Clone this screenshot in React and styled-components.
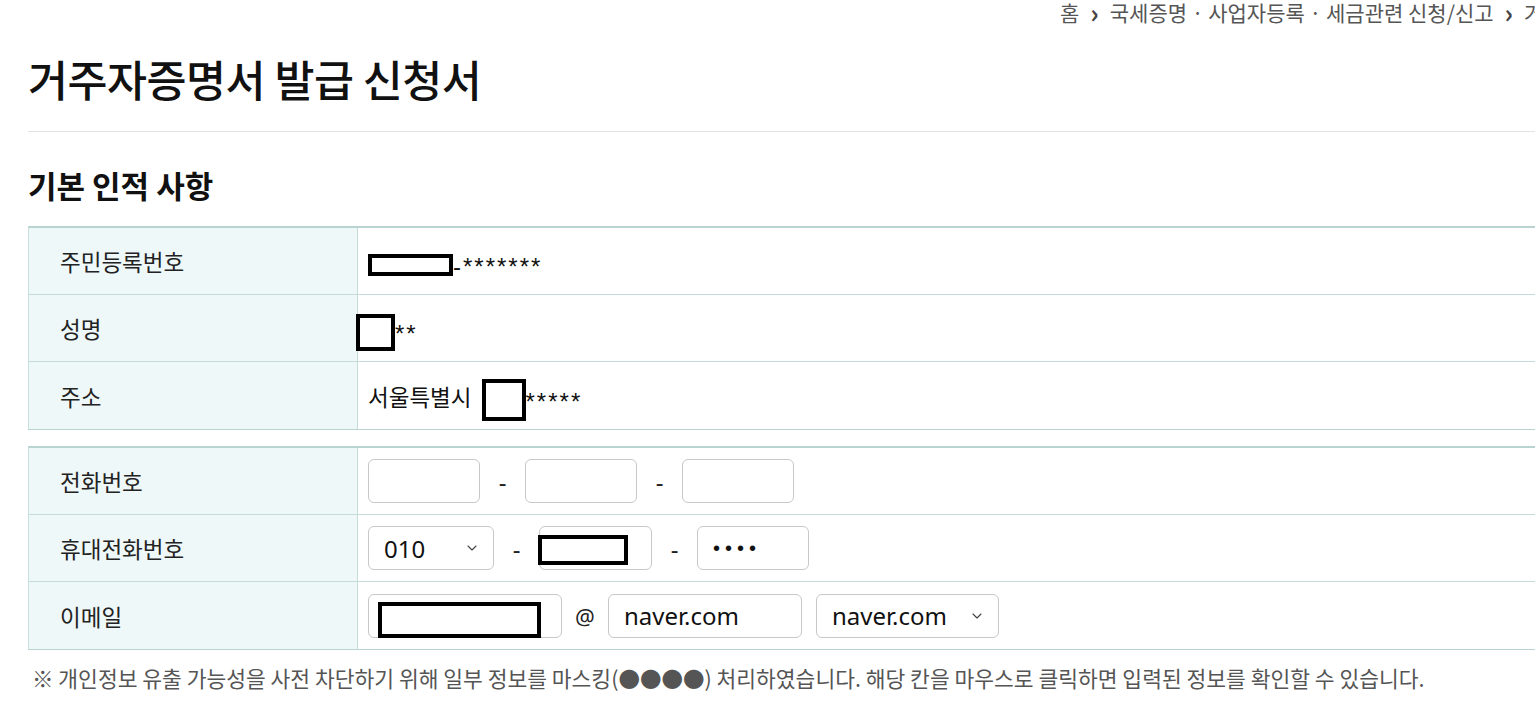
import styled, { createGlobalStyle } from "styled-components";
import { ChevronDown } from "lucide-react";

const GlobalStyle = createGlobalStyle`
  html, body {
    margin: 0;
    padding: 0;
    background: #fff;
    overflow: hidden;
  }
  body {
    font-family: "Noto Sans CJK KR", "Noto Sans", sans-serif;
    color: #111;
  }
`;

function Redact({ w, h, shift }) {
  return <RedactBox $w={w} $h={h} $shift={shift} />;
}

function Select({ value, width }) {
  return (
    <SelectWrap $w={width}>
      <SelectBox defaultValue={value}>
        <option>{value}</option>
      </SelectBox>
      <Chevron>
        <ChevronDown size={16} strokeWidth={1.7} />
      </Chevron>
    </SelectWrap>
  );
}

export default function App() {
  return (
    <Page>
      <GlobalStyle />
      <Breadcrumb>
        <span>홈</span>
        <Arrow>›</Arrow>
        <span>국세증명 · 사업자등록 · 세금관련 신청/신고</span>
        <Arrow>›</Arrow>
        <span>거</span>
      </Breadcrumb>
      <Title>거주자증명서 발급 신청서</Title>
      <Divider />
      <SectionTitle>기본 인적 사항</SectionTitle>

      <Table>
        <Row>
          <Label>주민등록번호</Label>
          <Value>
            <Redact w={85} h={22} shift={0} />
            <Masked>-*******</Masked>
          </Value>
        </Row>
        <Row>
          <Label>성명</Label>
          <Value>
            <Redact w={39} h={37} shift={-12} />
            <Masked>**</Masked>
          </Value>
        </Row>
        <Row $last>
          <Label>주소</Label>
          <Value>
            서울특별시
            <Redact w={44} h={42} shift={10} />
            <Masked>*****</Masked>
          </Value>
        </Row>
      </Table>

      <Table $gap>
        <Row>
          <Label>전화번호</Label>
          <Value>
            <Input $w={112} />
            <Dash>-</Dash>
            <Input $w={112} />
            <Dash>-</Dash>
            <Input $w={112} />
          </Value>
        </Row>
        <Row>
          <Label>휴대전화번호</Label>
          <Value>
            <Select value="010" width={126} />
            <Dash>-</Dash>
            <Input $w={113}>
              <InnerRedact $w={90} $h={30} />
            </Input>
            <Dash>-</Dash>
            <Input $w={112}>
              <Dots>••••</Dots>
            </Input>
          </Value>
        </Row>
        <Row $last>
          <Label>이메일</Label>
          <Value>
            <Input $w={194}>
              <InnerRedact $w={163} $h={36} $down />
            </Input>
            <At>@</At>
            <Input $w={194}>naver.com</Input>
            <Spacer />
            <Select value="naver.com" width={183} />
          </Value>
        </Row>
      </Table>

      <Note>
        ※ 개인정보 유출 가능성을 사전 차단하기 위해 일부 정보를 마스킹(●●●●) 처리하였습니다. 해당 칸을 마우스로 클릭하면 입력된 정보를 확인할 수 있습니다.
      </Note>
    </Page>
  );
}

const Page = styled.div`
  width: 1600px;
  padding-left: 28px;
  box-sizing: border-box;
`;

const Breadcrumb = styled.div`
  display: flex;
  align-items: center;
  gap: 10px;
  margin-left: 1032px;
  height: 24px;
  font-size: 21px;
  line-height: 24px;
  color: #555;
  white-space: nowrap;
`;

const Arrow = styled.span`
  font-size: 26px;
  font-weight: 700;
  color: #444;
  margin: 0 1px;
  line-height: 24px;
`;

const Title = styled.h1`
  margin: 30px 0 0;
  font-size: 43.5px;
  line-height: 50px;
  font-weight: 500;
  color: #111;
  letter-spacing: -0.5px;
`;

const Divider = styled.div`
  margin-top: 27px;
  height: 1px;
  background: #e3e3e3;
`;

const SectionTitle = styled.h2`
  margin: 33px 0 0;
  font-size: 31px;
  line-height: 40px;
  font-weight: 600;
  color: #111;
`;

const Table = styled.div`
  margin-top: ${(p) => (p.$gap ? "16px" : "21px")};
  border-top: 2px solid #b9d3d1;
  border-bottom: 1px solid #b9d3d1;
  border-left: 1px solid #c9dfdd;
`;

const Row = styled.div`
  display: grid;
  grid-template-columns: 329px 1fr;
  height: 67px;
  border-bottom: ${(p) => (p.$last ? "none" : "1px solid #c4dbd9")};
  box-sizing: border-box;
`;

const Label = styled.div`
  display: flex;
  align-items: center;
  padding-left: 31px;
  background: #eef8f8;
  border-right: 1px solid #c4dbd9;
  font-size: 22.5px;
  color: #222;
`;

const Value = styled.div`
  display: flex;
  align-items: center;
  padding-left: 10px;
  font-size: 22.5px;
  color: #111;
`;

const RedactBox = styled.span`
  display: inline-block;
  box-sizing: border-box;
  width: ${(p) => p.$w}px;
  height: ${(p) => p.$h}px;
  border: 4px solid #000;
  background: #fff;
  margin-left: ${(p) => p.$shift}px;
  margin-top: 8px;
`;

const Masked = styled.span`
  font-family: "Liberation Sans", sans-serif;
  font-size: 24px;
  margin-top: 12px;
  letter-spacing: 2px;
`;

const Input = styled.div`
  position: relative;
  display: flex;
  align-items: center;
  box-sizing: border-box;
  width: ${(p) => p.$w}px;
  height: 44px;
  border: 1px solid #c8c8c8;
  border-radius: 6px;
  background: #fff;
  padding-left: 15px;
  font-family: "Noto Sans", sans-serif;
  font-size: 24px;
  color: #111;
`;

const InnerRedact = styled.span`
  position: absolute;
  left: -2px;
  top: ${(p) => (p.$down ? "7px" : "8px")};
  width: ${(p) => p.$w}px;
  height: ${(p) => p.$h}px;
  box-sizing: border-box;
  border: 4px solid #000;
  background: #fff;
  margin-left: ${(p) => (p.$down ? "11px" : "0")};
`;

const Dots = styled.span`
  font-family: "Liberation Sans", sans-serif;
  font-size: 20px;
  letter-spacing: 5px;
`;

const Dash = styled.span`
  width: 45px;
  text-align: center;
  font-family: "Noto Sans", sans-serif;
  font-size: 24px;
  color: #222;
`;

const At = styled.span`
  width: 46px;
  text-align: center;
  font-family: "Noto Sans", sans-serif;
  font-size: 22px;
  color: #222;
`;

const Spacer = styled.span`
  width: 14px;
`;

const SelectWrap = styled.div`
  position: relative;
  width: ${(p) => p.$w}px;
  height: 44px;
`;

const SelectBox = styled.select`
  appearance: none;
  width: 100%;
  height: 100%;
  box-sizing: border-box;
  border: 1px solid #c8c8c8;
  border-radius: 6px;
  background: #fff;
  padding-left: 15px;
  font-family: "Noto Sans", sans-serif;
  font-size: 24px;
  color: #111;
`;

const Chevron = styled.span`
  position: absolute;
  right: 14px;
  top: 50%;
  transform: translateY(-50%);
  display: flex;
  color: #444;
  pointer-events: none;
`;

const Note = styled.p`
  margin: 14px 0 0 4px;
  font-size: 21.5px;
  line-height: 28px;
  color: #555;
  white-space: nowrap;
`;
